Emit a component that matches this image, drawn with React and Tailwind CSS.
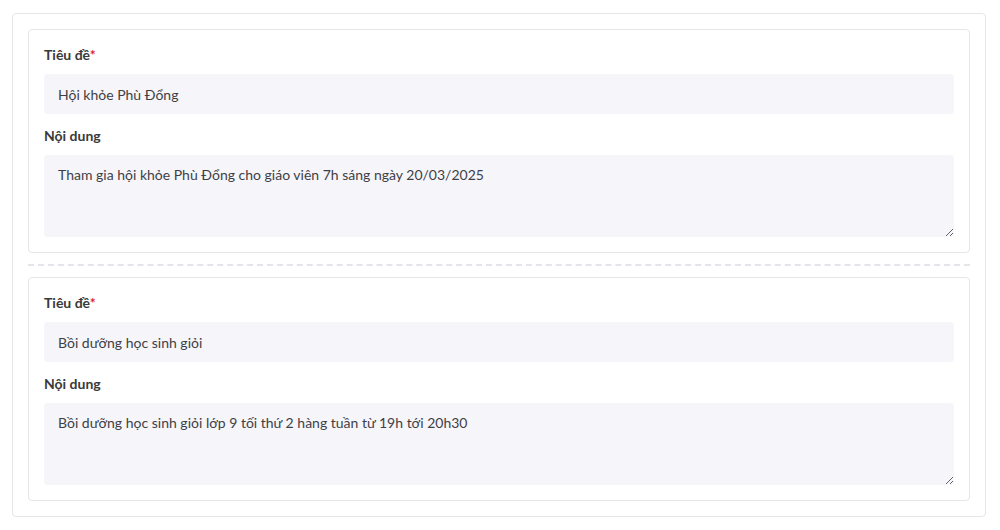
import React, { useState } from "react";

const initialNotices = [
  {
    id: 1,
    title: "Hội khỏe Phù Đổng",
    content: "Tham gia hội khỏe Phù Đổng cho giáo viên 7h sáng ngày 20/03/2025",
  },
  {
    id: 2,
    title: "Bồi dưỡng học sinh giỏi",
    content: "Bồi dưỡng học sinh giỏi lớp 9 tối thứ 2 hàng tuần từ 19h tới 20h30",
  },
];

function NoticeCard({ notice, onChange }) {
  return (
    <div className="border border-[#e6e6ea] rounded-[4px] px-[15px] py-[15px]">
      <label className="block text-[14px] leading-[20px] font-bold text-[#3a3a3a] mb-[9px]">
        Tiêu đề<span className="text-[#d9243f]">*</span>
      </label>
      <input
        type="text"
        value={notice.title}
        onChange={(e) => onChange({ ...notice, title: e.target.value })}
        className="block w-full h-[40px] px-[14px] bg-[#f5f5fa] rounded-[4px] text-[14px] text-[#3f3f46] outline-none"
      />
      <label className="block mt-[12px] text-[14px] leading-[20px] font-bold text-[#3a3a3a] mb-[9px]">
        Nội dung
      </label>
      <textarea
        value={notice.content}
        onChange={(e) => onChange({ ...notice, content: e.target.value })}
        className="block w-full h-[82px] px-[14px] py-[9px] bg-[#f5f5fa] rounded-[4px] text-[14px] leading-[22px] text-[#3f3f46] outline-none"
      />
    </div>
  );
}

export default function App() {
  const [notices, setNotices] = useState(initialNotices);

  const updateNotice = (updated) => {
    setNotices(notices.map((n) => (n.id === updated.id ? updated : n)));
  };

  return (
    <div
      className="bg-white w-[1000px] h-[530px] pt-[13px] pl-[12px]"
      style={{ fontFamily: "Lato, 'Noto Sans', sans-serif" }}
    >
      <div className="w-[974px] border border-[#e6e6ea] rounded-[4px] px-[15px] py-[15px]">
        {notices.map((notice, i) => (
          <React.Fragment key={notice.id}>
            {i > 0 && (
              <div className="my-[11px] border-t-2 border-dashed border-[#e4e4ea]" />
            )}
            <NoticeCard notice={notice} onChange={updateNotice} />
          </React.Fragment>
        ))}
      </div>
    </div>
  );
}
